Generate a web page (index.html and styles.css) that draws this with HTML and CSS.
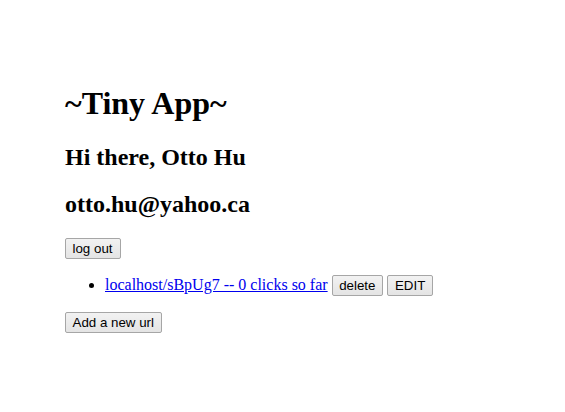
FILE: index.html
```html
<!DOCTYPE html>
<html>
<head>
<meta charset="utf-8">
<link rel="stylesheet" href="styles.css">
</head>
<body>
<main class="page">
  <h1 class="title">~Tiny App~</h1>
  <h2 class="greet">Hi there, Otto Hu</h2>
  <h2 class="greet">otto.hu@yahoo.ca</h2>
  <form class="form"><button class="btn" type="button">log out</button></form>
  <ul class="urls">
    <li class="url-item"><a class="url-link" href="#">localhost/sBpUg7 -- 0 clicks so far</a> <button class="btn" type="button">delete</button> <button class="btn" type="button">EDIT</button></li>
  </ul>
  <form class="form"><button class="btn" type="button">Add a new url</button></form>
</main>
</body>
</html>
```
FILE: styles.css
```css
body {
  margin: 0;
  font-family: "Liberation Serif", serif;
  color: #000;
  background: #fff;
}
.page {
  padding: 64px 65px 0;
}
.title {
  font-size: 32px;
  margin: 0.67em 0;
}
.greet {
  font-size: 24px;
  margin: 0.83em 0;
}
.form {
  margin: 0;
}
.btn {
  font-family: "Liberation Sans", sans-serif;
  font-size: 13.33px;
  color: #000;
  background: linear-gradient(#f2f2f2, #e4e4e4);
  border: 1px solid #a6a6a6;
  border-radius: 2px;
  padding: 2px 7px 2px 6.5px;
}
.urls {
  margin: 16px 0;
  padding-left: 40px;
  font-size: 16px;
}
.url-link {
  color: #0000ee;
}
```
